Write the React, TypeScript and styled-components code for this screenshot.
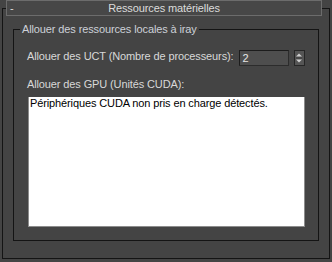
import React from "react";
import styled, { createGlobalStyle } from "styled-components";

const Global = createGlobalStyle`
  html, body { margin: 0; padding: 0; background: #444444; }
  body {
    font-family: "Liberation Sans", Arial, sans-serif;
    font-size: 11px;
    letter-spacing: -0.12px;
  }
`;

const Page = styled.div`
  width: 332px;
  height: 262px;
  background: #444444;
  padding-top: 8px;
  box-sizing: border-box;
  overflow: hidden;
`;

const Rollout = styled.div`
  margin-left: 2px;
  width: 328px;
  height: 251px;
  box-sizing: border-box;
  border: 1px solid #141414;
  display: flex;
  flex-direction: column;
`;

const Header = styled.div`
  margin: -9px 0 0 3px;
  width: 316px;
  height: 16px;
  box-sizing: border-box;
  background: #474747;
  border: 1px solid #6c6c6c;
  display: grid;
  grid-template-columns: 14px 1fr 14px;
  align-items: center;
  color: #dcdcdc;
`;

const Toggle = styled.span`
  padding-left: 3px;
  line-height: 14px;
`;

const Title = styled.span`
  text-align: center;
  line-height: 14px;
`;

const Group = styled.fieldset`
  margin: 7px 0 0 10px;
  width: 306px;
  height: 218px;
  box-sizing: border-box;
  border: 1px solid #141414;
  padding: 0;
  min-width: 0;
`;

const Legend = styled.legend`
  margin-left: 6px;
  padding: 0 2px;
  color: #cdd1d8;
  line-height: 13px;
`;

const Content = styled.div`
  padding: 0 13px;
  display: flex;
  flex-direction: column;
`;

const Row = styled.div`
  display: flex;
  align-items: flex-start;
  margin-top: 14px;
  height: 16px;
`;

const Label = styled.span`
  color: #d8d8d8;
  white-space: nowrap;
  line-height: 13px;
`;

const SpinInput = styled.div`
  margin-left: 5px;
  width: 53px;
  height: 16px;
  box-sizing: border-box;
  background: #4e4e4e;
  border: 1px solid #1c1c1c;
  border-right-color: #2c2c2c;
  border-bottom-color: #2c2c2c;
  color: #e6e6e6;
  padding: 1px 0 0 3px;
  line-height: 13px;
`;

const SpinButtons = styled.div`
  margin-left: 5px;
  width: 12px;
  height: 16px;
  box-sizing: border-box;
  background: #555555;
  border: 1px solid #262626;
  display: flex;
  align-items: center;
  justify-content: center;
`;

const GpuLabel = styled(Label)`
  margin-top: 12px;
`;

const TextBox = styled.div`
  margin-top: 6px;
  margin-left: 1px;
  width: 277px;
  height: 130px;
  box-sizing: border-box;
  background: #ffffff;
  border: 1px solid #8c8c8c;
  border-top: none;
  color: #000000;
  padding: 0 1px;
  line-height: 13px;
`;

const Arrows = () => (
  <svg width="8" height="12" viewBox="0 0 8 12">
    <path d="M4 1.5 L7 4.5 L1 4.5 Z" fill="#d0d0d0" />
    <rect x="1" y="5.5" width="6" height="1" fill="#3a3a3a" />
    <path d="M1 7.5 L7 7.5 L4 10.5 Z" fill="#d0d0d0" />
  </svg>
);

export default function App() {
  return (
    <Page>
      <Global />
      <Rollout>
        <Header>
          <Toggle>-</Toggle>
          <Title>Ressources matérielles</Title>
          <span />
        </Header>
        <Group>
          <Legend>Allouer des ressources locales à iray</Legend>
          <Content>
            <Row>
              <Label>Allouer des UCT (Nombre de processeurs):</Label>
              <SpinInput>2</SpinInput>
              <SpinButtons>
                <Arrows />
              </SpinButtons>
            </Row>
            <GpuLabel>Allouer des GPU (Unités CUDA):</GpuLabel>
            <TextBox>Périphériques CUDA non pris en charge détectés.</TextBox>
          </Content>
        </Group>
      </Rollout>
    </Page>
  );
}
